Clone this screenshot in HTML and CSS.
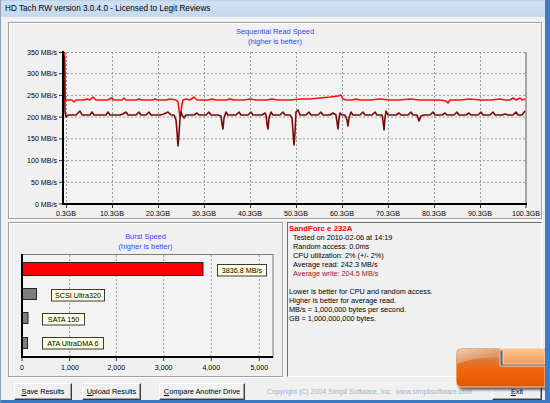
FILE: index.html
```html
<!DOCTYPE html>
<html lang="en">

<head>
    <meta charset="UTF-8" />
    <title>HD Tach RW version 3.0.4.0</title>
    <link rel="stylesheet" href="styles.css">
</head>

<body>
    <div class="window">
        <div class="titlebar">HD Tach RW version 3.0.4.0 - Licensed to Legit Reviews</div>

        <div class="client">
            <!-- Sequential read graph -->
            <div class="group seq-panel">
                <svg class="chart" width="532" height="195" viewBox="9 23 532 195">
                    <text class="chart-title" x="275" y="33.5">Sequential Read Speed</text>
                    <text class="chart-title" x="275" y="43.5">(higher is better)</text>

                    <rect x="63" y="52" width="463" height="152" fill="#f3f3f3" />
                    <g class="grid">
                        <line x1="63" y1="52.5" x2="526" y2="52.5" />
                        <line x1="63" y1="73.7" x2="526" y2="73.7" />
                        <line x1="63" y1="95.4" x2="526" y2="95.4" />
                        <line x1="63" y1="117.1" x2="526" y2="117.1" />
                        <line x1="63" y1="138.9" x2="526" y2="138.9" />
                        <line x1="63" y1="160.6" x2="526" y2="160.6" />
                        <line x1="63" y1="182.3" x2="526" y2="182.3" />
                        <line x1="66.5" y1="52" x2="66.5" y2="204" />
                        <line x1="112.5" y1="52" x2="112.5" y2="204" />
                        <line x1="158.5" y1="52" x2="158.5" y2="204" />
                        <line x1="204.5" y1="52" x2="204.5" y2="204" />
                        <line x1="250.5" y1="52" x2="250.5" y2="204" />
                        <line x1="296.5" y1="52" x2="296.5" y2="204" />
                        <line x1="342.5" y1="52" x2="342.5" y2="204" />
                        <line x1="388.5" y1="52" x2="388.5" y2="204" />
                        <line x1="434.5" y1="52" x2="434.5" y2="204" />
                        <line x1="480.5" y1="52" x2="480.5" y2="204" />
                    </g>

                    <path class="line-read" d="M64.5,52 L65,98 L66,100 L72,100 L74,102 L76,100 L84,100 L87,99 L90,100 L93,97 L96,100 L108,100 L111,98 L114,100 L122,100 L124,98 L126,100 L136,100 L139,99 L142,100 L152,100 L155,99 L158,100 L166,100 L170,99 L176,100 L178,102 L179,110 L180,117 L181,112 L182,104 L183,100 L186,99 L190,100 L194,97 L197,100 L208,100 L212,99 L216,100 L226,100 L230,99 L234,100 L244,100 L250,99 L256,100 L266,100 L272,99 L278,100 L290,100 L300,99 L310,99 L320,98 L330,97 L338,96 L341,95 L343,99 L346,100 L352,100 L356,99 L360,100 L370,100 L380,99 L390,100 L400,100 L410,99 L420,100 L440,100 L446,101 L448,103 L450,100 L460,100 L470,99 L480,100 L490,100 L500,99 L505,100 L510,100 L513,98 L516,100 L520,98 L522,100 L525,99" />
                    <path class="line-write" d="M64.5,56 L65,112 L66,117 L68,115 L76,115 L78,113 L80,111 L82,115 L90,115 L92,112 L94,115 L106,115 L108,112 L110,115 L120,115 L123,114 L126,112 L128,115 L136,115 L139,112 L141,115 L146,115 L149,112 L151,115 L160,115 L164,114 L168,112 L171,115 L174,115 L176,120 L177,132 L178,146 L179,134 L180,118 L181,112 L182,115 L184,118 L186,115 L194,115 L197,113 L199,115 L206,115 L209,112 L211,115 L218,115 L221,116 L222,124 L223,129 L224,118 L226,112 L228,115 L236,115 L239,112 L241,115 L248,115 L251,112 L253,115 L262,115 L265,113 L266,115 L267,124 L268,129 L269,118 L271,112 L273,115 L280,115 L283,112 L285,115 L290,115 L292,118 L293,132 L294,145 L295,132 L296,112 L298,110 L300,115 L306,115 L309,112 L311,115 L318,115 L321,112 L323,115 L330,115 L333,113 L336,115 L337,122 L338,129 L339,118 L340,113 L342,115 L345,115 L347,120 L348,126 L349,118 L351,112 L353,115 L360,115 L363,112 L365,115 L372,115 L375,112 L377,115 L382,115 L383,121 L384,130 L385,118 L386,111 L388,115 L396,115 L399,113 L401,115 L408,115 L411,112 L413,115 L417,115 L419,121 L421,116 L424,115 L430,115 L433,112 L435,115 L442,115 L445,113 L447,115 L454,115 L457,112 L459,115 L466,115 L469,113 L471,115 L478,115 L481,112 L483,115 L490,115 L493,112 L495,115 L502,115 L505,114 L508,115 L513,115 L516,112 L518,115 L522,115 L525,111" />

                    <line class="axis-thin" x1="526" y1="52" x2="526" y2="204" />
                    <line class="axis" x1="63" y1="51" x2="63" y2="205" />
                    <line class="axis" x1="62" y1="204" x2="527" y2="204" />
                    <g class="ticks">
                        <line x1="59" y1="52.5" x2="62" y2="52.5" />
                        <line x1="59" y1="73.7" x2="62" y2="73.7" />
                        <line x1="59" y1="95.4" x2="62" y2="95.4" />
                        <line x1="59" y1="117.1" x2="62" y2="117.1" />
                        <line x1="59" y1="138.9" x2="62" y2="138.9" />
                        <line x1="59" y1="160.6" x2="62" y2="160.6" />
                        <line x1="59" y1="182.3" x2="62" y2="182.3" />
                        <line x1="59" y1="204" x2="62" y2="204" />
                        <line x1="66.5" y1="205" x2="66.5" y2="208" />
                        <line x1="112.5" y1="205" x2="112.5" y2="208" />
                        <line x1="158.5" y1="205" x2="158.5" y2="208" />
                        <line x1="204.5" y1="205" x2="204.5" y2="208" />
                        <line x1="250.5" y1="205" x2="250.5" y2="208" />
                        <line x1="296.5" y1="205" x2="296.5" y2="208" />
                        <line x1="342.5" y1="205" x2="342.5" y2="208" />
                        <line x1="388.5" y1="205" x2="388.5" y2="208" />
                        <line x1="434.5" y1="205" x2="434.5" y2="208" />
                        <line x1="480.5" y1="205" x2="480.5" y2="208" />
                        <line x1="526" y1="205" x2="526" y2="208" />
                    </g>

                    <g class="ylabels">
                        <text x="57" y="54.8">350 MB/s</text>
                        <text x="57" y="76.3">300 MB/s</text>
                        <text x="57" y="98">250 MB/s</text>
                        <text x="57" y="119.7">200 MB/s</text>
                        <text x="57" y="141.4">150 MB/s</text>
                        <text x="57" y="163.1">100 MB/s</text>
                        <text x="57" y="184.8">50 MB/s</text>
                        <text x="57" y="206.5">0 MB/s</text>
                    </g>
                    <g class="xlabels">
                        <text x="66" y="215.5">0.3GB</text>
                        <text x="112" y="215.5">10.3GB</text>
                        <text x="158" y="215.5">20.3GB</text>
                        <text x="204" y="215.5">30.3GB</text>
                        <text x="250" y="215.5">40.3GB</text>
                        <text x="296" y="215.5">50.3GB</text>
                        <text x="342" y="215.5">60.3GB</text>
                        <text x="388" y="215.5">70.3GB</text>
                        <text x="434" y="215.5">80.3GB</text>
                        <text x="480" y="215.5">90.3GB</text>
                        <text x="526" y="215.5">100.3GB</text>
                    </g>
                </svg>
            </div>

            <div class="lower">
                <!-- Burst speed bars -->
                <div class="group burst-panel">
                    <svg class="chart" width="273" height="153" viewBox="9 223 273 153">
                        <text class="chart-title" x="145.5" y="238.5">Burst Speed</text>
                        <text class="chart-title" x="145.5" y="248.5">(higher is better)</text>

                        <rect x="22" y="254.5" width="251" height="102.5" fill="#f3f3f3" stroke="#7a7a7a" stroke-width="1" />
                        <g class="grid">
                            <line x1="69.7" y1="255" x2="69.7" y2="357" />
                            <line x1="116.3" y1="255" x2="116.3" y2="357" />
                            <line x1="163.7" y1="255" x2="163.7" y2="357" />
                            <line x1="211.3" y1="255" x2="211.3" y2="357" />
                            <line x1="259.3" y1="255" x2="259.3" y2="357" />
                        </g>

                        <rect class="bar-red" x="22" y="262.5" width="181" height="13" />
                        <rect class="bar-gray" x="22" y="288.5" width="14.5" height="11" />
                        <rect class="bar-gray" x="22" y="312.5" width="6" height="11" />
                        <rect class="bar-gray" x="22" y="337.5" width="5.5" height="11" />

                        <g class="tip">
                            <rect x="217.5" y="264.5" width="49" height="11.5" />
                            <text x="242" y="272.8">3836.8 MB/s</text>
                            <rect x="51.5" y="289.5" width="53" height="11.5" />
                            <text x="78" y="297.8">SCSI Ultra320</text>
                            <rect x="42.5" y="313.5" width="42" height="11.5" />
                            <text x="63.5" y="321.8">SATA 150</text>
                            <rect x="42.5" y="337.5" width="61" height="11.5" />
                            <text x="73" y="345.8">ATA UltraDMA 6</text>
                        </g>

                        <line class="axis" x1="22" y1="254" x2="22" y2="358" />
                        <line class="axis" x1="21" y1="357" x2="273" y2="357" />
                        <g class="ticks">
                            <line x1="22" y1="358" x2="22" y2="361" />
                            <line x1="69.7" y1="358" x2="69.7" y2="361" />
                            <line x1="116.3" y1="358" x2="116.3" y2="361" />
                            <line x1="163.7" y1="358" x2="163.7" y2="361" />
                            <line x1="211.3" y1="358" x2="211.3" y2="361" />
                            <line x1="259.3" y1="358" x2="259.3" y2="361" />
                        </g>
                        <g class="xlabels">
                            <text x="22" y="369.5">0</text>
                            <text x="70" y="369.5">1,000</text>
                            <text x="116.3" y="369.5">2,000</text>
                            <text x="163.7" y="369.5">3,000</text>
                            <text x="211.3" y="369.5">4,000</text>
                            <text x="259.3" y="369.5">5,000</text>
                        </g>
                    </svg>
                </div>

                <!-- Drive results -->
                <div class="info">
                    <div class="drive-name">SandForc e 232A</div>
                    <div class="indent">Tested on 2010-02-06 at 14:19</div>
                    <div class="indent">Random access: 0.0ms</div>
                    <div class="indent">CPU utilization: 2% (+/- 2%)</div>
                    <div class="indent">Average read: 242.3 MB/s</div>
                    <div class="indent write">Average write: 204.5 MB/s</div>
                    <div class="spacer"></div>
                    <div>Lower is better for CPU and random access.</div>
                    <div>Higher is better for average read.</div>
                    <div>MB/s = 1,000,000 bytes per second.</div>
                    <div>GB = 1,000,000,000 bytes.</div>
                </div>
            </div>

            <div class="buttons">
                <button class="btn btn-save"><u>S</u>ave Results</button>
                <button class="btn btn-upload"><u>U</u>pload Results</button>
                <button class="btn btn-compare"><u>C</u>ompare Another Drive</button>
                <span class="copyright">Copyright (C) 2004 Simpli Software, Inc.&nbsp; www.simplisoftware.com</span>
                <button class="btn btn-exit"><u>E</u>xit</button>
            </div>
        </div>

        <!-- Legit Reviews watermark over the corner -->
        <svg class="logo" width="98" height="50" viewBox="452 344 98 50">
            <defs>
                <linearGradient id="lgL" x1="0" y1="0" x2="0" y2="1">
                    <stop offset="0" stop-color="#d88a58" />
                    <stop offset="0.44" stop-color="#e0702a" />
                    <stop offset="0.47" stop-color="#f46c0c" />
                    <stop offset="1" stop-color="#e35400" />
                </linearGradient>
                <linearGradient id="lgR" x1="0" y1="0" x2="0" y2="1">
                    <stop offset="0" stop-color="#fcc898" />
                    <stop offset="1" stop-color="#f59a52" />
                </linearGradient>
                <linearGradient id="lgGloss" x1="0" y1="0" x2="1" y2="1">
                    <stop offset="0" stop-color="#ffffff" stop-opacity="0.55" />
                    <stop offset="1" stop-color="#ffffff" stop-opacity="0" />
                </linearGradient>
                <filter id="blur" x="-20%" y="-20%" width="140%" height="140%">
                    <feGaussianBlur stdDeviation="1.2" />
                </filter>
            </defs>
            <path d="M458,356 Q458,350 464,350 L548,350 L548,390 L464,390 Q458,390 458,384 Z" fill="#2a2a2a" opacity="0.7" filter="url(#blur)" />
            <path d="M456,354 Q456,348 462,348 L500,348 L500,366 L545,366 L545,387 L462,387 Q456,387 456,381 Z" fill="url(#lgL)" stroke="#fbe9da" stroke-width="0.8" />
            <path d="M457,354 Q457,349 462,349 L499,349 L499,358 Q478,356 457,364 Z" fill="url(#lgGloss)" />
            <path d="M503,348 L539,348 Q545,348 545,354 L545,364 L503,364 Z" fill="url(#lgR)" stroke="#fbe9da" stroke-width="0.8" />
        </svg>
    </div>
</body>

</html>
```

FILE: styles.css
```css
body {
    margin: 0;
    font-family: "Liberation Sans", Arial, sans-serif;
    background-color: #f0f0f0;
}

.window {
    position: relative;
    width: 550px;
    height: 403px;
    box-sizing: border-box;
    border-left: 1px solid #8da0b6;
    border-right: 5px solid #3b7cc4;
    border-bottom: 3px solid #3b7cc4;
    background-color: #f0f0f0;
    overflow: hidden;
}

.titlebar {
    height: 17px;
    line-height: 18px;
    padding-left: 4px;
    font-size: 8.2px;
    color: #000;
    background: linear-gradient(#b9cfe8, #cfe0f3 2px, #c4d9ef);
}

.client {
    padding: 5px 0 0 7px;
}

/* etched group boxes */
.group {
    box-sizing: border-box;
    border: 1px solid #a0a0a0;
    box-shadow: inset 1px 1px 0 #fff, 1px 1px 0 #fff;
}

.seq-panel {
    width: 534px;
    height: 197px;
}

.chart {
    display: block;
    font-family: "Liberation Sans", Arial, sans-serif;
}

.chart-title {
    font-size: 7.4px;
    fill: #3c3cf5;
    text-anchor: middle;
}

.grid line {
    stroke: #9a9a9a;
    stroke-width: 1;
    stroke-dasharray: 2 2;
}

.axis {
    stroke: #000;
    stroke-width: 2;
}

.axis-thin {
    stroke: #555;
    stroke-width: 1;
}

.ticks line {
    stroke: #333;
    stroke-width: 1;
}

.ylabels text {
    font-size: 7.1px;
    fill: #000;
    text-anchor: end;
}

.xlabels text {
    font-size: 7.1px;
    fill: #000;
    text-anchor: middle;
}

.line-read {
    fill: none;
    stroke: #ff1010;
    stroke-width: 1.6;
    stroke-linejoin: round;
}

.line-write {
    fill: none;
    stroke: #7a0a0a;
    stroke-width: 1.6;
    stroke-linejoin: round;
}

.lower {
    display: flex;
    margin-top: 3px;
    height: 155px;
}

.burst-panel {
    width: 275px;
    height: 155px;
}

.bar-red {
    fill: #ff0000;
    stroke: #222;
    stroke-width: 1;
}

.bar-gray {
    fill: #7e7e7e;
    stroke: #222;
    stroke-width: 1;
}

.tip rect {
    fill: #ffffe1;
    stroke: #3a3a3a;
    stroke-width: 1;
}

.tip text {
    font-size: 7.2px;
    fill: #000;
    text-anchor: middle;
}

/* results text box */
.info {
    margin-left: 4px;
    width: 255px;
    height: 155px;
    box-sizing: border-box;
    border: 1px solid;
    border-color: #707070 #fff #fff #707070;
    padding: 1px 0 0 1px;
    font-size: 7.3px;
    line-height: 9px;
    color: #000;
}

.drive-name {
    color: #ff0000;
    font-weight: bold;
    font-size: 7.8px;
}

.indent {
    padding-left: 4px;
}

.write {
    color: #9b2020;
}

.spacer {
    height: 9px;
}

.buttons {
    display: flex;
    align-items: center;
    margin-top: 6px;
    height: 17px;
}

.btn {
    height: 17px;
    box-sizing: border-box;
    padding: 0;
    border: 1px solid;
    border-color: #fff #3c3c3c #3c3c3c #fff;
    box-shadow: inset -1px -1px 0 #a0a0a0;
    background-color: #f0f0f0;
    font-family: "Liberation Sans", Arial, sans-serif;
    font-size: 7.3px;
    color: #000;
}

.btn-save {
    margin-left: 6px;
    width: 58px;
}

.btn-upload {
    margin-left: 10px;
    width: 59px;
}

.btn-compare {
    margin-left: 18px;
    width: 86px;
}

.copyright {
    margin-left: 22px;
    font-size: 7px;
    color: #a3b3c6;
    white-space: nowrap;
}

.btn-exit {
    margin-left: auto;
    margin-right: 3px;
    width: 50px;
}

.logo {
    position: absolute;
    left: 451px;
    top: 344px;
}
```
